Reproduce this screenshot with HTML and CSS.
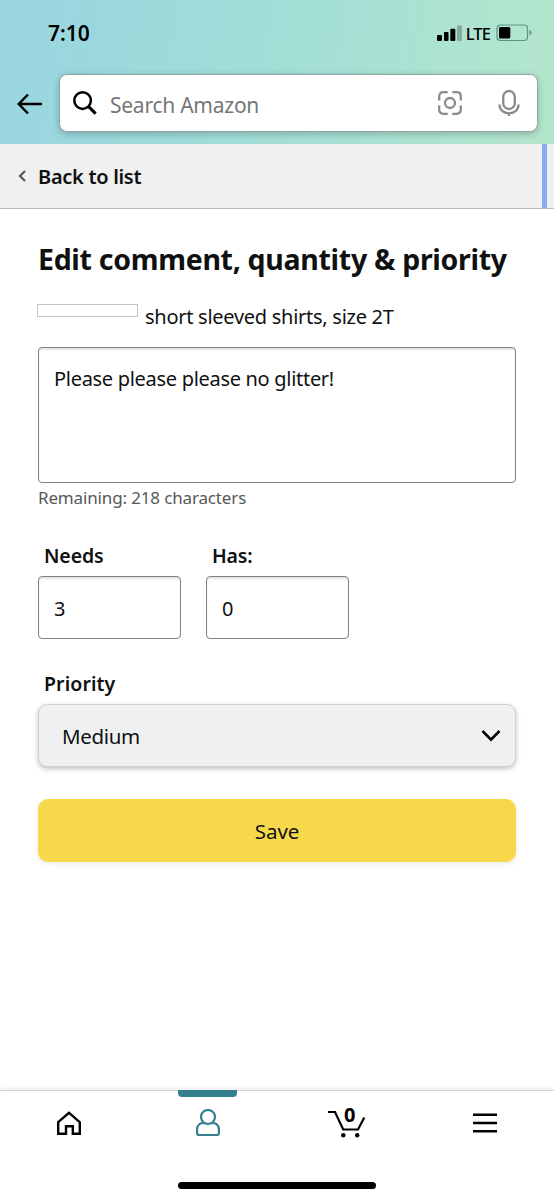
FILE: index.html
```html
<!DOCTYPE html>
<html lang="en">
<head>
<meta charset="utf-8">
<meta name="viewport" content="width=device-width, initial-scale=1">
<title>Edit comment, quantity &amp; priority</title>
<link rel="stylesheet" href="styles.css">
</head>
<body>
<div class="app">
  <header class="header">
    <div class="status">
      <span class="time">7:10</span>
      <div class="indicators">
        <svg class="signal" width="25" height="16" viewBox="0 0 25 16"><rect x="0" y="10" width="5" height="6" rx="1"/><rect x="7" y="7" width="4.500" height="9" rx="1"/><rect x="13.300" y="3.700" width="5" height="12.300" rx="1"/><rect x="20" y="0.500" width="4.800" height="15.500" rx="1" opacity=".25"/></svg>
        <span class="network">LTE</span>
        <svg class="battery" width="36" height="18" viewBox="0 0 36 18"><rect x="1" y="1" width="30.500" height="15.500" rx="3.500" fill="none" stroke="#5e9380" stroke-width="1.200"/><rect x="3" y="3" width="11.300" height="11.500" rx="1.500"/><path d="M33.500 6v5.500q2-.8 2-2.750T33.500 6z" fill="#5e9380"/></svg>
      </div>
    </div>
    <div class="search-row">
      <svg class="back" width="26" height="22" viewBox="0 0 26 22"><path d="M11 1.500 1.800 11l9.200 9.500M2 11h23" fill="none" stroke="#000" stroke-width="2.500"/></svg>
      <div class="search">
        <svg class="glass" width="24" height="24" viewBox="0 0 24 24"><circle cx="9.600" cy="9.600" r="8.300" fill="none" stroke="#000" stroke-width="2.500"/><path d="m15.400 15.400 7.200 7.200" stroke="#000" stroke-width="3"/></svg>
        <span class="placeholder">Search Amazon</span>
        <svg class="camera" width="26" height="26" viewBox="0 0 26 26" fill="none" stroke="#878c8c" stroke-width="2.300"><path d="M2.200 10.500V6.500q0-4.300 4.300-4.300h4.200M15.300 2.200h4.200q4.300 0 4.300 4.300v4M23.800 15.500v4q0 4.300-4.300 4.300h-4.200M10.700 23.800H6.500q-4.300 0-4.300-4.300v-4"/><circle cx="13" cy="13" r="5"/></svg>
        <svg class="mic" width="22" height="28" viewBox="0 0 22 28" fill="none" stroke="#878c8c" stroke-width="2.300"><rect x="5.200" y="2" width="11.600" height="18" rx="5.800"/><path d="M1.500 15.500C1.500 20.700 5.500 24.300 11 24.300s9.500-3.600 9.500-8.800M11 24.300v2.700"/></svg>
      </div>
    </div>
  </header>
  <nav class="crumb">
    <svg width="8" height="12" viewBox="0 0 8 12"><path d="M7 1 2 6l5 5" fill="none" stroke="#555" stroke-width="2.200"/></svg>
    <span class="crumb-text">Back to list</span>
    <i class="marker"></i>
  </nav>
  <main class="content">
    <h1 class="title">Edit comment, quantity &amp; priority</h1>
    <div class="item"><i class="redacted"></i><span class="item-name">short sleeved shirts, size 2T</span></div>
    <div class="comment"><span class="comment-text">Please please please no glitter!</span></div>
    <div class="remaining"><span>Remaining: 218 characters</span></div>
    <div class="quantities">
      <div class="field"><span class="label needs">Needs</span><div class="input">3</div></div>
      <div class="field"><span class="label has">Has:</span><div class="input">0</div></div>
    </div>
    <span class="label priority">Priority</span>
    <div class="select"><span class="medium">Medium</span><svg width="20" height="14" viewBox="0 0 20 14"><path d="m1.500 2 8.500 8.700L18.500 2" fill="none" stroke="#000" stroke-width="2.600"/></svg></div>
    <div class="save"><span>Save</span></div>
  </main>
  <footer class="tabs">
    <div class="tab"><svg width="26" height="26" viewBox="0 0 26 26"><path d="M2.200 12.200 13 2.800l10.800 9.400v11.600h-7v-7.500H10v7.500H2.200z" fill="none" stroke="#000" stroke-width="2.400"/></svg></div>
    <div class="tab active"><svg width="26" height="28" viewBox="0 0 26 28" fill="none" stroke="#35808f" stroke-width="2.200"><circle cx="13" cy="8" r="7"/><path d="M8.500 14.200h-.700c-3.600 0-5.700 2.600-5.700 6.300v3.500q0 2 2 2h17.800q2 0 2-2v-3.500c0-3.700-2.100-6.300-5.700-6.300h-.700"/></svg></div>
    <div class="tab"><svg class="cart" width="38" height="32" viewBox="0 0 38 32"><path d="M0 5h7l8.200 17.500H30L36.300 10.500" fill="none" stroke="#000" stroke-width="2.200"/><circle cx="15.300" cy="28.300" r="2.200"/><circle cx="29.200" cy="28.300" r="2.200"/></svg><span class="count">0</span></div>
    <div class="tab"><svg width="24" height="20" viewBox="0 0 24 20"><path d="M0 1.800h24M0 10h24M0 18.200h24" stroke="#000" stroke-width="2.400"/></svg></div>
    <i class="home-bar"></i>
  </footer>
</div>
</body>
</html>
```
FILE: styles.css
```css
* { box-sizing: border-box; }
body { margin: 0; font-family: "Noto Sans", "Open Sans", sans-serif; color: #0f1111; background: #fff; }
svg { display: block; flex: none; }
span { white-space: nowrap; }
.app { width: 554px; height: 1200px; display: flex; flex-direction: column; overflow: hidden; }
.header { height: 144px; background: linear-gradient(100deg, #98d5e1 0%, #9edbd9 35%, #a7e1d4 65%, #b5e6cc 100%); }
.status { height: 68px; padding: 0 22px 2px 48px; display: flex; align-items: center; justify-content: space-between; }
.time { font-size: 21px; font-weight: 600; color: #000; }
.indicators { display: flex; align-items: center; }
.network { margin: 0 6px 0 4px; font-size: 16.5px; font-weight: 500; letter-spacing: -0.9px; color: #000; }
.search-row { display: flex; align-items: center; padding: 6px 16px 0 17px; }
.back { margin-top: 2px; }
.search { flex: 1; height: 58px; margin-left: 16px; border: 1px solid #8fa7a6; border-radius: 8px; background: #fff; box-shadow: 0 2px 7px #0f11113d; display: flex; align-items: center; padding: 0 17px 0 13px; }
.placeholder { margin-left: 13px; margin-right: auto; padding-top: 4px; font-size: 21px; letter-spacing: -0.25px; color: #757778; }
.camera { margin-right: 35px; }
.crumb { position: relative; height: 65px; padding-left: 18px; display: flex; align-items: center; gap: 12px; background: #f0f0f0; border-bottom: 1px solid #b9bcbc; }
.crumb-text { padding-top: 1px; font-size: 20px; font-weight: 600; letter-spacing: -0.3px; }
.marker { position: absolute; right: 7px; top: 0; width: 5px; height: 64px; background: #86aff0; }
.content { flex: 1; padding: 27px 38px 0; }
.title { margin: 0; height: 46px; line-height: 46px; font-size: 28.5px; font-weight: 700; letter-spacing: -0.3px; white-space: nowrap; }
.item { height: 65px; padding-top: 21px; display: flex; gap: 7px; line-height: 28px; font-size: 20px; letter-spacing: -0.27px; }
.redacted { width: 101px; height: 13px; margin: 1px 0 0 -1px; border: 1px solid #c6c6c6; }
.comment { height: 136px; padding: 17px 15px; border: 1px solid #7f8383; border-radius: 4px; box-shadow: inset 0 2px 2px #0f11111c; font-size: 20px; line-height: 28px; letter-spacing: -0.3px; }
.remaining { height: 29px; line-height: 30px; font-size: 17px; letter-spacing: -0.15px; color: #565959; }
.quantities { display: flex; gap: 25px; padding-top: 30px; }
.field { width: 143px; }
.label { display: block; padding-left: 6px; height: 28px; line-height: 28px; font-size: 19.5px; font-weight: 600; letter-spacing: -0.1px; }
.has { letter-spacing: -0.2px; }
.input { height: 63px; margin-top: 6px; border: 1px solid #7f8383; border-radius: 4px; box-shadow: inset 0 2px 2px #0f11111c; padding: 1px 15px 0; line-height: 62px; font-size: 20px; }
.priority { margin-top: 31px; letter-spacing: 0.1px; }
.select { height: 63px; margin-top: 6px; padding: 0 14px 0 23px; display: flex; align-items: center; justify-content: space-between; border: 1px solid #cdd0d1; border-radius: 9px; background: #eff0f2; box-shadow: 0 2px 5px #0f111140; font-size: 20.5px; letter-spacing: -0.35px; }
.save { height: 63px; margin-top: 32px; display: flex; align-items: center; justify-content: center; border-radius: 10px; background: #f7d84b; box-shadow: 0 2px 5px #d5d9d980; font-size: 20.5px; }
.tabs { position: relative; height: 110px; flex: none; display: grid; grid-template-columns: repeat(4, 1fr); border-top: 1px solid #cfd5d6; box-shadow: 0 -1px 6px #0f11111a; }
.tab { position: relative; height: 64px; display: flex; align-items: center; justify-content: center; }
.active::before { content: ""; position: absolute; top: -1px; left: 39px; width: 59px; height: 7px; border-radius: 0 0 4px 4px; background: #35808f; }
.cart { margin-left: 2px; }
.count { position: absolute; left: 67px; top: 11px; font-size: 20px; line-height: 26px; font-weight: 700; color: #000; }
.home-bar { position: absolute; left: 178px; bottom: 11px; width: 198px; height: 7px; border-radius: 4px; background: #000; }
```
